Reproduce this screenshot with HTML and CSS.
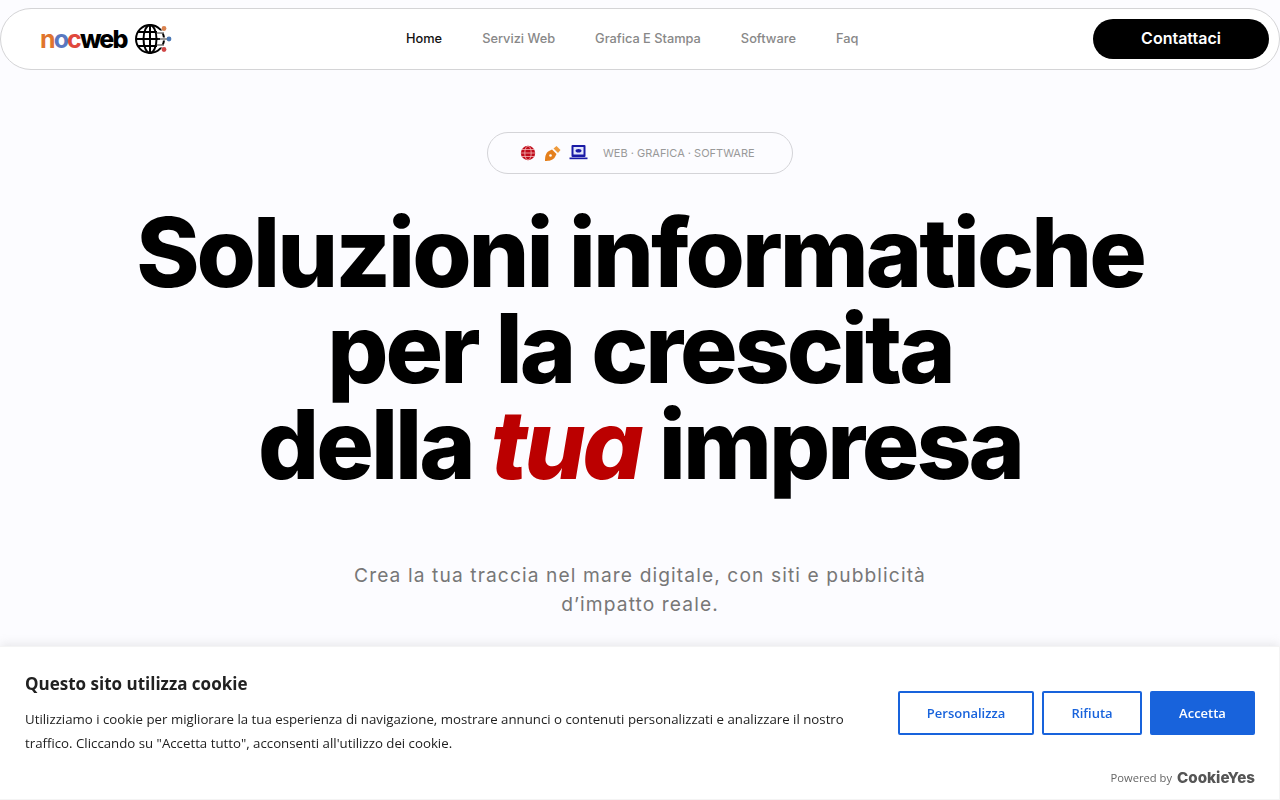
FILE: index.html
```html
<!DOCTYPE html>
<html lang="it">
<head>
    <meta charset="UTF-8">
    <meta name="viewport" content="width=device-width, initial-scale=1.0">
    <title>Nocweb - Soluzioni informatiche</title>
    <link rel="stylesheet" href="styles.css">
</head>
<body>
    <header class="navbar">
        <a class="logo" href="#">
            <span class="logo-text"><span class="logo-noc"><span class="c-orange">n</span><span class="c-blue">o</span><span class="c-red">c</span></span>web</span>
            <svg class="logo-globe" width="38" height="32" viewBox="0 0 38 32" fill="none" stroke="#000" stroke-width="2">
                <circle cx="16" cy="16" r="14"/>
                <ellipse cx="16" cy="16" rx="6.500" ry="14"/>
                <path d="M16 2v28M2 16h28M4 9h24M4 23h24"/>
                <path d="M23 9h7M26 16h10M23 23h7" stroke="#fff" stroke-width="3"/>
                <path d="M22 10h8M24 16h10M22 22h8" stroke="#333" stroke-width="1.200"/>
                <circle cx="30" cy="5.500" r="2.400" fill="#d9824f" stroke="none"/>
                <circle cx="35" cy="16" r="2.400" fill="#4a78b5" stroke="none"/>
                <circle cx="30" cy="26.500" r="2.400" fill="#d04848" stroke="none"/>
            </svg>
        </a>
        <nav class="nav-links">
            <a class="active" href="#">Home</a>
            <a href="#">Servizi Web</a>
            <a href="#">Grafica E Stampa</a>
            <a href="#">Software</a>
            <a href="#">Faq</a>
        </nav>
        <a class="btn-contact" href="#">Contattaci</a>
    </header>

    <main class="hero">
        <div class="pill">
            <span class="pill-icons">
                <svg width="16" height="16" viewBox="0 0 16 16" fill="none" stroke="#f3b7b7" stroke-width="0.800">
                    <circle cx="8" cy="8" r="7.200" fill="#c00d1c" stroke="none"/>
                    <ellipse cx="8" cy="8" rx="3.200" ry="7"/>
                    <path d="M1 8h14M2 4.500h12M2 11.500h12"/>
                </svg>
                <svg width="17" height="17" viewBox="0 0 17 17">
                    <path d="M1 16c0-4 .5-8 4-10l3-1.500 4.500 4.500-1.500 3c-2 3.500-6 4-10 4z" fill="#e47f1c"/>
                    <path d="M9.500 3.500l3-2.500 4 4-2.500 3z" fill="#ee9a3c"/>
                    <circle cx="6.500" cy="10.500" r="1.300" fill="#fff"/>
                </svg>
                <svg width="19" height="16" viewBox="0 0 19 16">
                    <rect x="2.500" y="0" width="14" height="12" rx="1" fill="#1a1aa6"/>
                    <rect x="4.500" y="2" width="10" height="7.500" fill="#e3e7fb"/>
                    <ellipse cx="9.500" cy="5.700" rx="3" ry="1.800" fill="#1a1aa6"/>
                    <path d="M0.500 12.500h18v1.700h-18z" fill="#1a1aa6"/>
                </svg>
            </span>
            <span class="pill-text">WEB · GRAFICA · SOFTWARE</span>
        </div>
        <h1>Soluzioni informatiche<br>per la crescita<br>della <em>tua</em> impresa</h1>
        <p class="subtitle">Crea la tua traccia nel mare digitale, con siti e pubblicità<br>d’impatto reale.</p>
    </main>

    <!-- Cookie banner -->
    <section class="cookie-bar">
        <div class="cookie-main">
            <div class="cookie-text">
                <h2>Questo sito utilizza cookie</h2>
                <p>Utilizziamo i cookie per migliorare la tua esperienza di navigazione, mostrare annunci o contenuti personalizzati e analizzare il nostro traffico. Cliccando su "Accetta tutto", acconsenti all'utilizzo dei cookie.</p>
            </div>
            <div class="cookie-buttons">
                <button class="btn-outline btn-custom">Personalizza</button>
                <button class="btn-outline btn-reject">Rifiuta</button>
                <button class="btn-accept">Accetta</button>
            </div>
        </div>
        <div class="cookie-footer">
            <span class="powered">Powered by</span>
            <span class="cookieyes">CookieYes</span>
        </div>
    </section>
</body>
</html>
```

FILE: styles.css
```css
* {
    box-sizing: border-box;
}
html, body {
    height: 100%;
}
body {
    margin: 0;
    background-color: #fcfcff;
    font-family: Inter, sans-serif;
    overflow: hidden;
}
a {
    text-decoration: none;
}
.navbar {
    height: 62px;
    margin: 8px 0 0;
    padding: 0 10px 0 39px;
    background-color: #fff;
    border: 1px solid #d4d4d6;
    border-radius: 31px;
    display: flex;
    align-items: center;
}
.logo {
    display: flex;
    align-items: center;
    gap: 8px;
    width: 133px;
}
.logo-text {
    font-family: Inter, sans-serif;
    font-size: 25px;
    font-weight: 800;
    letter-spacing: -1.900px;
    line-height: 1;
    color: #000;
}
.logo-noc {
    font-weight: 700;
}
.c-orange { color: #e0752d; }
.c-blue { color: #5a78c0; }
.c-red { color: #e0483c; }
.nav-links {
    display: flex;
    gap: 40px;
    margin-left: 233px;
    padding-bottom: 2px;
}
.nav-links a {
    font-size: 12.800px;
    font-weight: 500;
    color: #888;
}
.nav-links a.active {
    color: #111;
}
.btn-contact {
    margin-left: auto;
    width: 176px;
    height: 40px;
    padding-bottom: 2px;
    background-color: #000;
    color: #fff;
    border-radius: 20px;
    font-size: 16px;
    font-weight: 600;
    display: flex;
    align-items: center;
    justify-content: center;
}
.hero {
    display: flex;
    flex-direction: column;
    align-items: center;
    text-align: center;
    padding-top: 62px;
}
.pill {
    width: 306px;
    height: 42px;
    border: 1px solid #d4d4d8;
    border-radius: 21px;
    display: flex;
    align-items: center;
    padding-left: 32px;
}
.pill-icons {
    display: flex;
    align-items: center;
    gap: 8px;
    margin-right: 15px;
}
.pill-text {
    font-size: 11px;
    color: #999;
}
h1 {
    margin: 30px 0 0;
    font-size: 96px;
    font-weight: 800;
    line-height: 96px;
    letter-spacing: -3px;
    color: #000;
}
h1 em {
    color: #bb0000;
    font-style: italic;
}
.subtitle {
    margin: 69px 0 0;
    font-size: 19.200px;
    line-height: 29px;
    letter-spacing: 1.100px;
    color: #777;
}
.cookie-bar {
    position: fixed;
    left: 0;
    right: 0;
    bottom: 0;
    height: 154px;
    padding: 25px 24px 12px;
    background-color: #fff;
    border: 1px solid #f4f4f4;
    border-left: none;
    box-shadow: 0 -1px 10px rgba(172, 171, 171, 0.3);
    font-family: "Open Sans", sans-serif;
}
.cookie-main {
    display: flex;
    justify-content: space-between;
    align-items: center;
    padding-left: 1px;
}
.cookie-text {
    width: 830px;
}
.cookie-text h2 {
    margin: 0 0 11px;
    font-size: 17px;
    font-weight: 700;
    line-height: 24px;
    color: #212121;
}
.cookie-text p {
    margin: 0;
    font-size: 13.250px;
    line-height: 24px;
    color: #212121;
}
.cookie-buttons {
    display: flex;
    gap: 8px;
    padding-bottom: 2px;
}
.cookie-buttons button {
    height: 44px;
    border-radius: 2px;
    font-family: inherit;
    font-size: 13px;
    font-weight: 600;
    cursor: pointer;
}
.btn-outline {
    background-color: #fff;
    border: 2px solid #1863dc;
    color: #1863dc;
}
.btn-custom {
    width: 136px;
}
.btn-reject {
    width: 100px;
}
.cookie-buttons .btn-accept {
    width: 105px;
    background-color: #1863dc;
    border: 2px solid #1863dc;
    color: #fff;
}
.cookie-footer {
    display: flex;
    justify-content: flex-end;
    align-items: center;
    gap: 5px;
    margin-top: 13px;
}
.powered {
    font-size: 11.200px;
    color: #666;
}
.cookieyes {
    font-family: Inter, sans-serif;
    font-size: 15.200px;
    font-weight: 800;
    color: #555;
}
```
